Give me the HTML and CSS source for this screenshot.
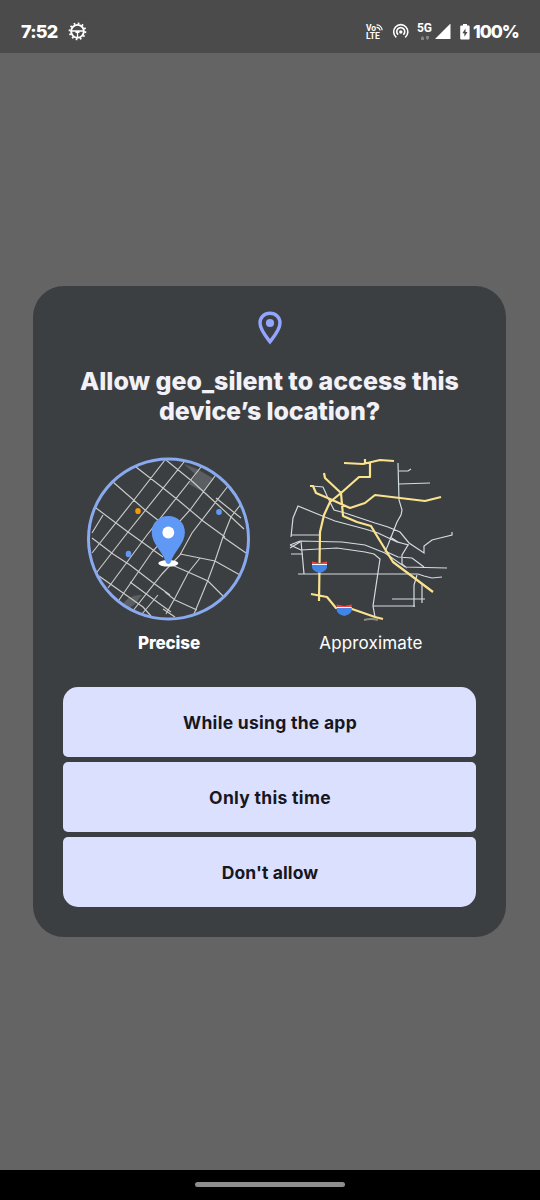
FILE: index.html
```html
<!DOCTYPE html>
<html lang="en">
<head>
<meta charset="utf-8">
<title>Location permission</title>
<link rel="stylesheet" href="styles.css">
</head>
<body>
<div class="screen">
  <header class="status">
    <span class="clock">7:52</span>
    <svg class="gear" width="20" height="20" viewBox="0 0 20 20" fill="none" stroke="#fff">
      <circle cx="9.5" cy="9.3" r="6.4" stroke-width="1.9"/>
      <circle cx="9.5" cy="9.3" r="7.9" stroke-width="1.9" stroke-dasharray="1.7 2.436"/>
      <path d="M4 9h11M9.5 9v7M7.5 10.3h4" stroke-width="1.3"/>
    </svg>
    <span class="spacer"></span>
    <span class="volte"><span class="vo">Vo<svg width="7" height="7" viewBox="0 0 7 7" fill="none" stroke="#fff" stroke-width="1.2"><path d="M.5 1C3.5.6 6 3.2 6.2 6.3M.5 3.3c2 0 3.3 1.3 3.6 3.2"/></svg></span><span>LTE</span></span>
    <svg class="hotspot" width="18" height="18" viewBox="0 0 18 18" fill="none" stroke="#fff" stroke-width="1.6">
      <path d="M4.3 14.3a7.1 7.1 0 1 1 8.9 0M6.2 11.7a4 4 0 1 1 5.1 0"/><circle cx="8.8" cy="9" r="1.7" fill="#fff" stroke="none"/>
    </svg>
    <span class="network"><span>5G</span><svg width="8" height="4" viewBox="0 0 8 4" fill="#858585"><path d="M0 1.5 1.5 0 3 1.5V4H0zM5 0h3v2.5L6.5 4 5 2.5z"/></svg></span>
    <svg class="signal" width="16" height="16" viewBox="0 0 16 16"><path d="M0 15 15.5 -.5V15z" fill="#fff"/></svg>
    <svg class="battery" width="10" height="16" viewBox="0 0 10 16"><path d="M3 0h4v1.6h1.6q1 0 1 1V14.5q0 1-1 1H1.2q-1 0-1-1V2.6q0-1 1-1H3z" fill="#fff"/><path d="M5.5 4.5 2.4 9.3h2v3.5L7.5 8h-2z" fill="#484848"/></svg>
    <span class="percent">100%</span>
  </header>
  <main class="backdrop">
    <section class="dialog">
      <svg class="pin" width="24" height="34" viewBox="0 0 24 34" fill="none"><path d="M12 2.2C6.3 2.2 2 6.5 2 12 2 18.5 7.6 25 12 30.7 16.4 25 22 18.5 22 12 22 6.5 17.7 2.2 12 2.2z" stroke="#93a5ff" stroke-width="3.4"/><circle cx="12" cy="12" r="4.1" fill="#93a5ff"/></svg>
      <h1 class="title"><span class="line1">Allow geo_silent to access this</span><br><span class="line2">device’s location?</span></h1>
      <div class="choices">
        <div class="choice">
          <svg width="164" height="164" viewBox="87 457 164 164" fill="none">
            <defs><clipPath id="disc"><circle cx="168.5" cy="539" r="79"/></clipPath></defs>
            <g clip-path="url(#disc)">
              <path d="M184 464l13 5 17 10-11 13-14-8 7-9zM122 606q6-12 20-11l-7 9-8 6z" fill="#5c5f62"/>
              <path class="street" d="M96 508 128 532 163 557M113 482 145 510 168 528M136 467 163 488 178 500 203 521 225 537M166 460 193 482 217 504 244 529M216 498 241 518
              M165 460 134 500 92 553M184 462 128 532 97 572M201 467 147 535 108 588M215 476 190 510 152 552 119 600M228 486 192 533 180 555 162 574 132 612M241 504 231 517 223 537 215 561 208 580 194 614
              M223 537 246 553M180 554 200 558 215 561 240 575M200 558 188 573 175 598 166 614M172 565 188 572 208 581 224 597M165 592 175 600 197 610M163 609 175 617
              M103 515 92 533M92 538 113 554 130 565 152 582 170 595M99 576 143 607 151 616M130 582 149 596 171 612M158 595 142 614"/>
            </g>
            <circle cx="168.5" cy="539" r="80" stroke="#8aaaf0" stroke-width="3"/>
            <ellipse cx="138" cy="511" rx="2.8" ry="3.1" fill="#f79a00"/><circle cx="219" cy="512" r="2.9" fill="#5f99f3"/><ellipse cx="128.5" cy="554" rx="2.8" ry="3.2" fill="#5f99f3"/>
            <ellipse cx="168.3" cy="563.3" rx="10" ry="3.3" fill="#fff"/>
            <path d="M168.3 516c-9.5 0-16.6 7-16.6 16.3 0 11.5 10.5 18.6 14.2 30 .7 2.3 4.1 2.3 4.8 0 3.7-11.4 14.2-18.5 14.2-30 0-9.3-7.1-16.3-16.6-16.3z" fill="#5f99f5"/>
            <circle cx="168.3" cy="532.5" r="5.9" fill="#fff"/>
          </svg>
          <span class="label precise">Precise</span>
        </div>
        <div class="choice">
          <svg width="164" height="164" viewBox="289 457 164 164" fill="none">
            <path class="road" d="M312 486 323 487 328 498 334 510 345 513 375 523 388 527 400 532 409 543 424 553V546L432 540 440 538 452 535V532
            M291 537 293 518 298 506 315 513 335 521 365 529 378 533 397 542 409 545M291 535H320M290 545 300 541 342 542 365 545 385 553 405 567 447 568
            M290 545 301 550 337 548 365 552 374 554 380 559 373 606 375 617M290 548 300 542M291 554H303M301 541 304 574M298 574H418L424 576 432 578 442 577
            M373 606H415M392 599H425M417 575 414 585V607M422 584V603M398 463 399 500 402 510 401 515 397 522 388 545 385 552M399 471 408 471 411 469M399 484 430 483
            M390 537 398 542 408 545 402 555V564L407 568M387 552 398 557 412 558 424 567"/>
            <path d="M364 620Q371 618 378 620" stroke="#8b8b83" stroke-width="2"/>
            <path class="highway" d="M344 463 363 464 380 460 394 461M365 459V463M370 462V477H359L341 493 330 502 324 515 320 532 319 601
            M324 473 325 478 341 493 343 516 357 522 371 526 377 536 393 562 433 592M310 486H313L316 493 330 499 350 508 365 503 375 495 425 501 441 497
            M311 594 327 597 336 608 352 609 375 617 383 619"/>
            <path d="M312 565H327Q328 571 319.5 573 311 571 312 565z" fill="#4285e8"/><path d="M312 561.5 319.5 563 327 561.5V564.5H312z" fill="#f0443e"/><path d="M312 564.5H327" stroke="#fff"/>
            <g transform="translate(24.7 43)"><path d="M312 565H327Q328 571 319.5 573 311 571 312 565z" fill="#4285e8"/><path d="M312 561.5 319.5 563 327 561.5V564.5H312z" fill="#f0443e"/><path d="M312 564.5H327" stroke="#fff"/></g>
          </svg>
          <span class="label approximate">Approximate</span>
        </div>
      </div>
      <div class="actions">
        <button class="action"><span class="using">While using the app</span></button>
        <button class="action"><span class="once">Only this time</span></button>
        <button class="action"><span class="deny">Don't allow</span></button>
      </div>
    </section>
  </main>
  <footer class="navbar"><span class="handle"></span></footer>
</div>
</body>
</html>
```
FILE: styles.css
```css
* { box-sizing: border-box; }
body { margin: 0; font-family: Inter, "Open Sans", sans-serif; }
svg { display: block; flex: none; }
.screen { width: 540px; height: 1200px; display: flex; flex-direction: column; background: #646464; }
.status { height: 53px; padding: 10px 22px 0 21px; display: flex; align-items: center; background: #4b4b4b; color: #fff; white-space: nowrap; }
.clock { width: 37px; font-size: 18px; font-weight: 800; letter-spacing: -.75px; }
.gear { margin-left: 10px; }
.spacer { flex: 1; }
.volte { width: 18px; font: 700 8.5px/8px Roboto, sans-serif; display: flex; flex-direction: column; }
.vo { display: flex; }
.hotspot { margin-left: 8px; }
.network { width: 15px; height: 20px; margin-left: 7px; font: 700 12px/13px Roboto, sans-serif; display: flex; flex-direction: column; align-items: center; gap: 1px; }
.signal { margin-left: 3px; }
.battery { margin-left: 9px; }
.percent { width: 45px; margin-left: 3px; font-size: 17.5px; font-weight: 800; letter-spacing: -1.05px; }
.backdrop { height: 1117px; padding: 233px 34px 0 33px; }
.dialog { height: 651px; padding: 25px 30px 30px; border-radius: 31px; background: #3c3f42; color: #f2f1f8; display: flex; flex-direction: column; align-items: center; }
.title { margin: 21px 0 0; font-size: 25px; line-height: 30px; font-weight: 800; letter-spacing: -.15px; text-align: center; white-space: nowrap; }
.line1 { letter-spacing: -.02px; }
.choices { width: 413px; margin-top: 31px; padding: 0 23px 0 24px; display: flex; justify-content: space-between; }
.choice { width: 164px; display: flex; flex-direction: column; align-items: center; }
.street { stroke: #c9ccca; stroke-width: 1.15; }
.road { stroke: #d3dce1; stroke-width: 1.2; }
.highway { stroke: #fbe28d; stroke-width: 2.2; stroke-linejoin: round; }
.label { margin-top: 10px; font-size: 17px; line-height: 24px; color: #fff; }
.precise { font-weight: 800; letter-spacing: -.1px; }
.approximate { letter-spacing: .15px; }
.actions { width: 413px; margin-top: auto; display: flex; flex-direction: column; gap: 5px; }
.action { height: 70px; border: 0; padding: 2px 0 0 1px; border-radius: 5px; background: #dce0ff; color: #161720; font: 700 17.5px/24px Inter, sans-serif; }
.using { letter-spacing: .27px; }
.once { letter-spacing: .3px; }
.deny { letter-spacing: .1px; }
.action:first-child { border-radius: 15px 15px 5px 5px; }
.action:last-child { border-radius: 5px 5px 15px 15px; }
.navbar { height: 30px; padding-bottom: 2px; background: #000; display: flex; justify-content: center; align-items: center; }
.handle { width: 150px; height: 5px; border-radius: 3px; background: #8d8d8d; }
```
